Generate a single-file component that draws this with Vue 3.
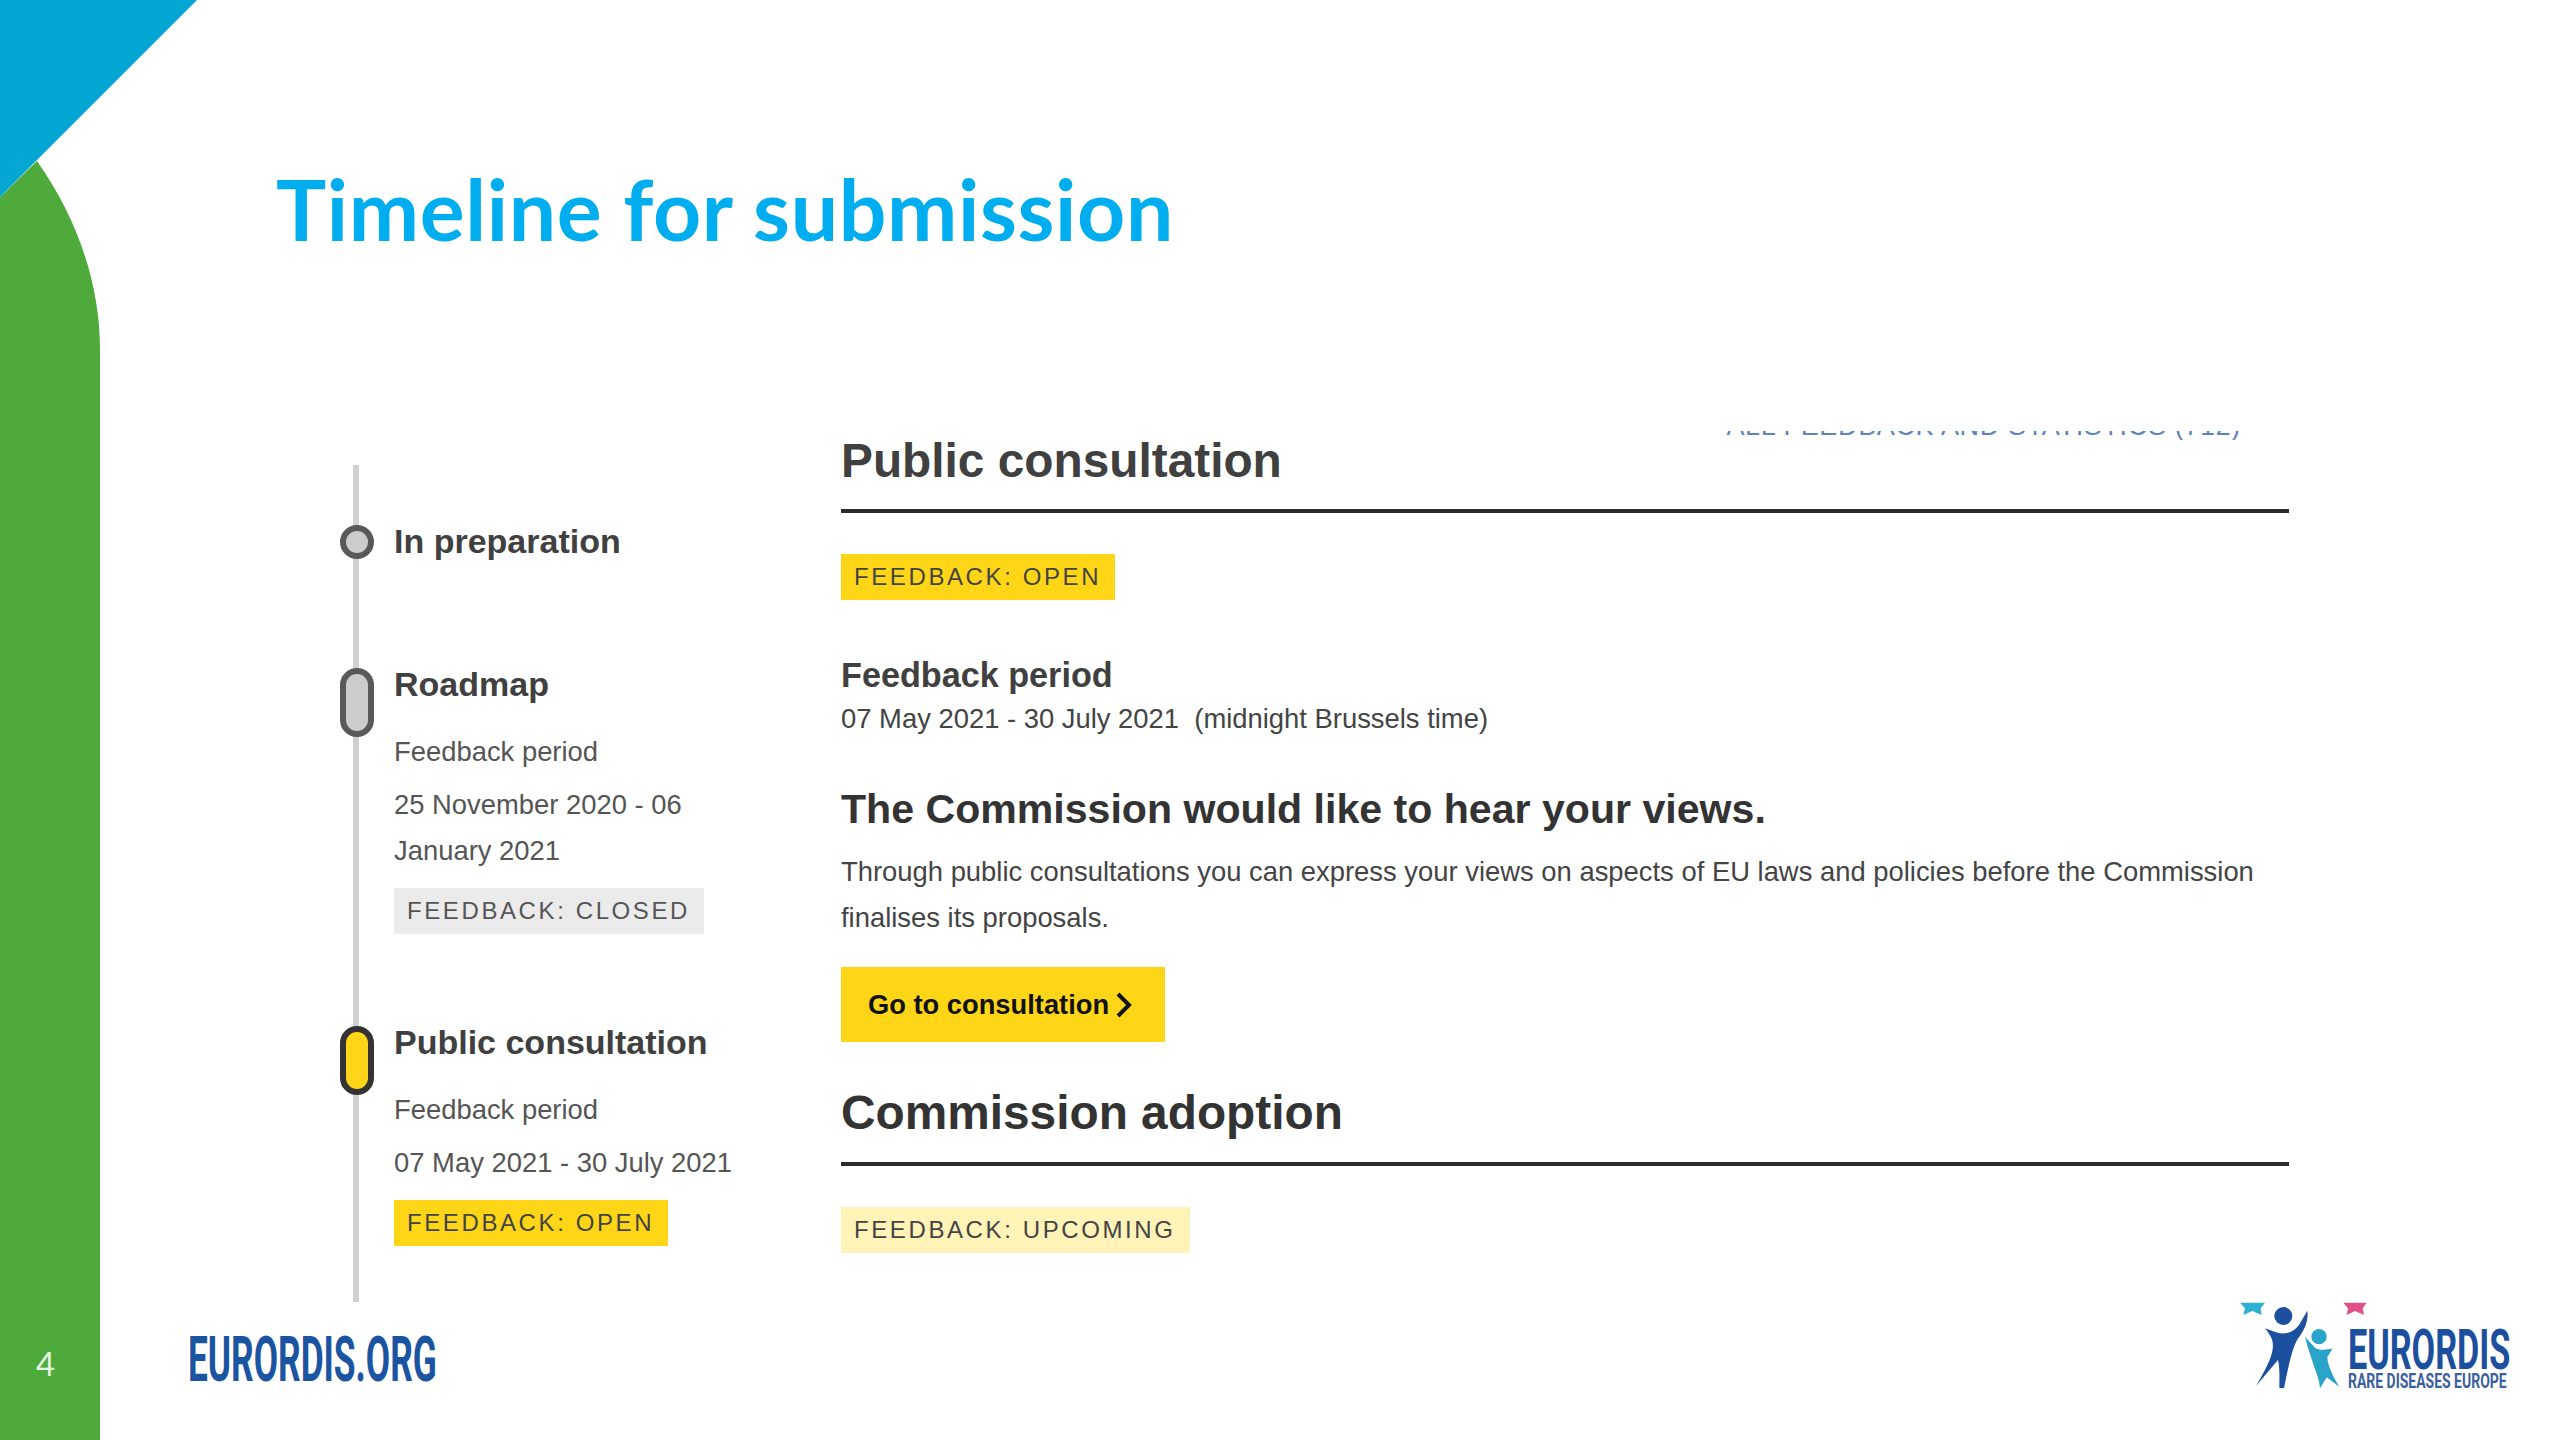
<script setup>
const steps = [
  { id: 'prep', title: 'In preparation', dot: 'round' },
  { id: 'road', title: 'Roadmap', dot: 'pill', label: 'Feedback period', dates: '25 November 2020 - 06 January 2021', tag: 'FEEDBACK: CLOSED', tagClass: 'closed' },
  { id: 'cons', title: 'Public consultation', dot: 'pill active', label: 'Feedback period', dates: '07 May 2021 - 30 July 2021', tag: 'FEEDBACK: OPEN', tagClass: 'open' }
]
</script>

<template>
  <div class="slide">
    <svg class="deco" width="200" height="1440" viewBox="0 0 200 1440" aria-hidden="true">
      <path d="M0 197 L37 161 C75 215 100 280 100 350 L100 1440 L0 1440 Z" fill="#4faa3c" />
      <path d="M0 0 L197 0 L0 197 Z" fill="#04a7d3" />
    </svg>

    <h1 class="title">Timeline for submission</h1>

    <main class="content">
      <aside class="timeline">
        <div class="rail"></div>
        <section v-for="s in steps" :key="s.id" class="step" :class="s.id">
          <span class="dot" :class="s.dot"></span>
          <div class="step-body">
            <h4 class="step-title">{{ s.title }}</h4>
            <p v-if="s.label" class="step-label">{{ s.label }}</p>
            <p v-if="s.dates" class="step-dates">{{ s.dates }}</p>
            <span v-if="s.tag" class="tag" :class="s.tagClass">{{ s.tag }}</span>
          </div>
        </section>
      </aside>

      <article class="detail">
        <header class="head first">
          <div class="clip"><a class="all-link">ALL FEEDBACK AND STATISTICS (712)</a></div>
          <h2>Public consultation</h2>
        </header>
        <div class="tag open gap-a">FEEDBACK: OPEN</div>
        <h3 class="period">Feedback period</h3>
        <p class="period-date">07 May 2021 - 30 July 2021&nbsp; (midnight Brussels time)</p>
        <h3 class="hear">The Commission would like to hear your views.</h3>
        <p class="para">Through public consultations you can express your views on aspects of EU laws and policies before the Commission finalises its proposals.</p>
        <button class="cta" type="button">
          <span>Go to consultation</span>
          <svg width="18" height="26" viewBox="0 0 18 26" aria-hidden="true"><path d="M3 2 L14 13 L3 24" fill="none" stroke="#111" stroke-width="4" /></svg>
        </button>
        <header class="head second">
          <h2>Commission adoption</h2>
        </header>
        <div class="tag upcoming gap-b">FEEDBACK: UPCOMING</div>
      </article>
    </main>

    <footer class="foot">
      <div class="foot-left">
        <span class="page-no">4</span>
        <span class="org">EURORDIS.ORG</span>
      </div>
      <div class="logo">
        <svg class="figures" width="116" height="92" viewBox="120 60 348 276" aria-hidden="true">
          <path d="M120 68 H195 L182 85 L185 105 L157 93 L130 105 L135 85 Z" fill="#2fb0d3" />
          <path d="M430 68 H500 L488 85 L492 105 L465 93 L440 105 L444 85 Z" fill="#e0508a" />
          <circle cx="250" cy="108" r="27" fill="#1d4f9f" />
          <path d="M195 145 L232 158 C258 165 282 155 297 135 L322 92 C327 128 308 158 290 182 C275 210 265 262 252 324 L238 324 C238 292 240 268 234 240 L168 318 C190 280 208 248 216 218 C222 192 220 175 195 145 Z" fill="#1d4f9f" />
          <circle cx="357" cy="170" r="23" fill="#2aa3c9" />
          <path d="M315 170 L345 203 C355 210 375 212 398 205 L382 232 C382 250 395 285 418 320 L380 292 L360 325 C358 300 350 280 343 262 C335 235 322 200 315 170 Z" fill="#2aa3c9" />
        </svg>
        <div class="logo-text">
          <span class="logo-main">EURORDIS</span>
          <span class="logo-sub">RARE DISEASES EUROPE</span>
        </div>
      </div>
    </footer>
  </div>
</template>

<style scoped>
.slide {
  position: relative;
  width: 2560px;
  height: 1440px;
  overflow: hidden;
  background: #fff;
  display: flex;
  flex-direction: column;
  font-family: "Liberation Sans", Arial, sans-serif;
}
.deco { position: absolute; left: 0; top: 0; }
h1, h2, h3, h4, p { margin: 0; }

.title {
  margin: 161px 0 0 276px;
  font: 700 84px/96px Lato, sans-serif;
  color: #00aeef;
  letter-spacing: 0.65px;
}

.content {
  display: flex;
  margin: 163px 0 0 340px;
  height: 880px;
}

.timeline { position: relative; width: 501px; flex: none; }
.rail {
  position: absolute;
  left: 13px;
  top: 45px;
  width: 6px;
  height: 837px;
  background: #d0d0d0;
}
.step { position: relative; display: flex; gap: 20px; align-items: flex-start; }
.step.prep { padding-top: 99px; }
.step.road { margin-top: 99px; }
.step.cons { margin-top: 86px; }

.dot {
  flex: none;
  box-sizing: border-box;
  width: 34px;
  margin-top: 6px;
  border: 6px solid #595959;
  border-radius: 17px;
  background: #ccc;
}
.dot.round { height: 34px; }
.dot.pill { height: 69px; }
.dot.active { background: #ffd617; border-color: #333; }

.step-body { width: 345px; }
.step-title { font-size: 34px; line-height: 44px; font-weight: 700; color: #404040; }
.step-label { margin-top: 23px; font-size: 27.4px; line-height: 46px; color: #555; }
.step-dates { margin-top: 7px; margin-bottom: 14px; font-size: 27.4px; line-height: 46px; color: #555; }

.tag {
  display: inline-block;
  box-sizing: border-box;
  height: 46px;
  padding: 0 14px 0 13px;
  font-size: 24px;
  line-height: 46px;
  letter-spacing: 2.6px;
  white-space: nowrap;
  color: #444;
}
.tag.closed { background: #ebebeb; color: #555; }
.tag.open { background: #ffd617; }
.tag.upcoming { background: #fff3b8; }
.detail .tag { display: block; width: fit-content; }

.detail { width: 1448px; flex: none; color: #333; }
.head { position: relative; border-bottom: 4px solid #2b2b2b; }
.head h2 { font-weight: 700; font-size: 47.8px; }
.head.first { padding: 13px 0 20px; }
.head.first h2 { line-height: 56px; color: #404040; }
.head.second { margin-top: 42px; padding-bottom: 20px; }
.head.second h2 { line-height: 58px; color: #333; }

.clip {
  position: absolute;
  right: 48px;
  top: 11px;
  height: 9px;
  overflow: hidden;
}
.all-link {
  display: block;
  margin-top: -21px;
  font-size: 27px;
  line-height: 32px;
  letter-spacing: 0.65px;
  color: #5f82bd;
  white-space: nowrap;
}

.gap-a { margin-top: 41px; }
.gap-b { margin-top: 41px; }
.period { margin-top: 55px; font-size: 34.2px; line-height: 40px; color: #404040; }
.period-date { margin-top: 4px; font-size: 27.4px; line-height: 40px; color: #444; }
.hear { margin-top: 46px; font-size: 41.1px; line-height: 48px; color: #333; }
.para { margin-top: 16px; font-size: 27.4px; line-height: 46px; color: #444; }

.cta {
  display: flex;
  align-items: center;
  gap: 6px;
  margin-top: 26px;
  width: 324px;
  height: 75px;
  padding: 0 0 0 27px;
  border: 0;
  background: #ffd617;
  font: 700 27.3px "Liberation Sans", Arial, sans-serif;
  color: #111;
}

.foot {
  margin-top: auto;
  margin-bottom: 48px;
  height: 92px;
  display: flex;
  justify-content: space-between;
  padding-right: 50px;
}
.foot-left { position: relative; display: flex; align-items: flex-end; padding-left: 188px; }
.page-no {
  position: absolute;
  left: 36px;
  top: 45px;
  font: 400 33px/36px Lato, sans-serif;
  color: #e6f5e0;
}
.org {
  display: block;
  margin-bottom: 1px;
  font: 700 63px/62px Roboto, sans-serif;
  color: #1b54a0;
  transform: scaleX(0.56);
  transform-origin: left center;
  white-space: nowrap;
}
.logo { display: flex; align-items: flex-start; gap: 0; }
.figures { display: block; margin-right: -8px; overflow: visible; }
.logo-text { display: flex; flex-direction: column; width: 162px; padding-top: 28px; color: #1d4f9f; }
.logo-main {
  font: 700 56px/44px Roboto, sans-serif;
  transform: scaleX(0.61);
  transform-origin: left center;
  white-space: nowrap;
}
.logo-sub {
  margin-top: -1px;
  font: 700 21px/20px Roboto, sans-serif;
  transform: scaleX(0.665);
  transform-origin: left center;
  white-space: nowrap;
  color: #3c5f9e;
}
</style>
